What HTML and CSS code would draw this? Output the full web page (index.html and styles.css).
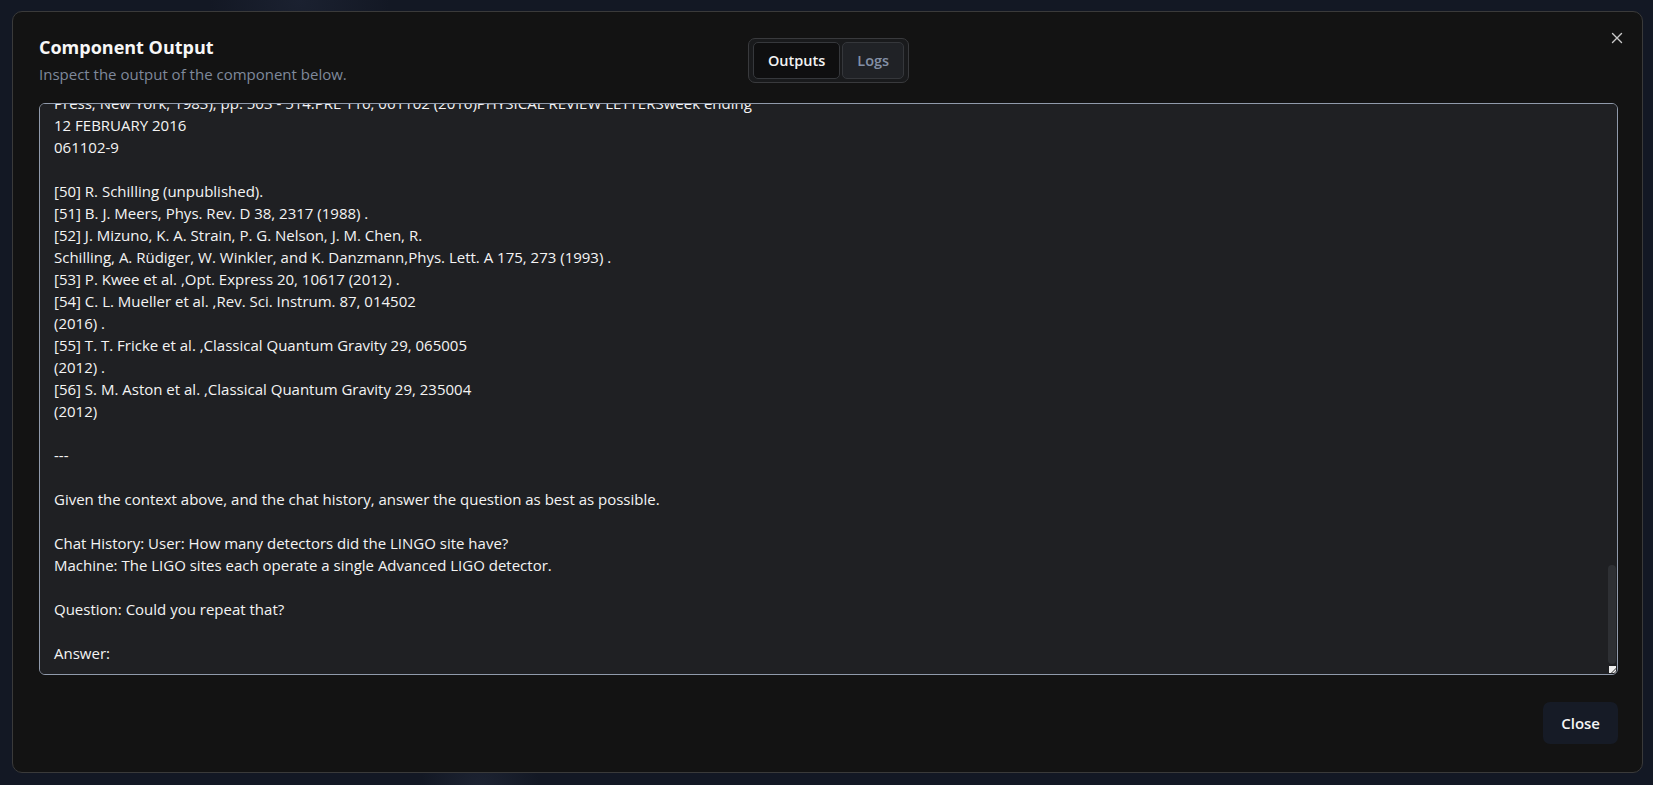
FILE: index.html
```html
<!DOCTYPE html>
<html lang="en">
<head>
<meta charset="utf-8">
<title>Component Output</title>
<link rel="stylesheet" href="styles.css">
<script src="script.js" defer></script>
</head>
<body>
<div class="dialog" role="dialog" aria-labelledby="dlg-title">
  <button class="dialog-x" aria-label="Close">
    <svg viewBox="0 0 14 14" width="14" height="14"><path d="M2.5 2.5 11.5 11.5M11.5 2.5 2.5 11.5" fill="none" stroke="currentColor" stroke-width="1.4" stroke-linecap="round"/></svg>
  </button>
  <header class="dialog-head">
    <div class="dialog-titles">
      <h2 id="dlg-title" class="dialog-title">Component Output</h2>
      <p class="dialog-sub">Inspect the output of the component below.</p>
    </div>
    <div class="tabs" role="tablist">
      <button class="tab tab-active" role="tab">Outputs</button>
      <button class="tab" role="tab">Logs</button>
    </div>
    <div></div>
  </header>
  <div class="output-wrap">
  <textarea class="output" readonly spellcheck="false">The LIGO detectors have observed gravitational waves from
the merger of two stellar-mass black holes. The detected
waveform matches the predictions of general relativity for
the inspiral and merger of a pair of black holes and the
ringdown of the resulting single black hole. These
observations demonstrate the existence of binary stellar-mass
black hole systems. This is the first direct detection of
gravitational waves and the first observation of a binary
black hole merger.

Acknowledgments.—The authors gratefully acknowledge the
support of the United States
National Science Foundation (NSF) for the construction and
operation of the LIGO Laboratory and Advanced LIGO as well
as the Science and Technology Facilities Council (STFC) of the
United Kingdom, the Max-Planck-Society (MPS), and the State
of Niedersachsen/Germany for support of the construction of
Advanced LIGO and construction and operation of the
GEO600 detector. Additional support for Advanced LIGO
was provided by the Australian Research Council. We
gratefully acknowledge the Italian Istituto Nazionale di Fisica
Nucleare (INFN), the French Centre National de la Recherche
Scientifique (CNRS) and the Foundation for Fundamental
Research on Matter supported by the Netherlands
Organisation for Scientific Research, for the construction
and operation of the Virgo detector and the creation and
support of the EGO consortium.

[1] A. Einstein, Sitzungsber. K. Preuss. Akad. Wiss. 1, 688
(1916).
[2] A. Einstein, Sitzungsber. K. Preuss. Akad. Wiss. 1, 154
(1918).
[3] P. R. Saulson, Gen. Relativ. Gravit. 43, 3289 (2011) .
[4] K. Schwarzschild, Sitzungsber. K. Preuss. Akad. Wiss. 1,
189 (1916).
[5] D. Finkelstein, Phys. Rev. 110, 965 (1958) .
[6] M. D. Kruskal, Phys. Rev. 119, 1743 (1960) .
[7] R. P. Kerr, Phys. Rev. Lett. 11, 237 (1963) .
[8] C. V. Vishveshwara, Nature (London) 227, 936 (1970) .
[9] W. H. Press, Astrophys. J. 170, L105 (1971) .
[10] S. Chandrasekhar and S. L. Detweiler, Proc. R. Soc. A
344, 441 (1975) .
[11] R. A. Hulse and J. H. Taylor, Astrophys. J. 195, L51
(1975) .
[12] J. H. Taylor and J. M. Weisberg, Astrophys. J. 253, 908
(1982) .
[13] W. Press and K. Thorne, Annu. Rev. Astron. Astrophys.
10, 335 (1972) .
[14] J. Weber, Phys. Rev. 117, 306 (1960) .
[15] P. Astone et al. ,Phys. Rev. D 82, 022003 (2010) .
[16] M. E. Gertsenshtein and V. I. Pustovoit, Sov. Phys. JETP
16, 433 (1962) .
[17] G. E. Moss, L. R. Miller, and R. L. Forward, Appl. Opt.
10, 2495 (1971) .
[18] R. Weiss, Electromagnetically coupled broadband
gravitational antenna, Quarterly Report of the Research
Laboratory for Electronics, MIT Report No. 105, 1972,
https://dcc.ligo.org/LIGO-P720002/public/main.
[19] R. W. P. Drever, in Gravitational Radiation, edited by N.
Deruelle and T. Piran (North-Holland, Amsterdam, 1983),
p. 321.
[20] R. W. P. Drever, F. J. Raab, K. S. Thorne, R. Vogt, and R.
Weiss, Laser Interferometer Gravitational-wave
Observatory (LIGO) Technical Report, 1989,
https://dcc.ligo.org/LIGO-M890001/public/main.
[21] A. Abramovici et al. ,Science 256, 325 (1992) .
[22] A. Brillet, A. Giazotto et al. , Virgo Project Technical
Report No. VIR-0517A-15, 1989,
https://tds.ego-gw.it/ql/?c=10728.
[23] J. Hough et al. , Proposal for a joint German-British
interferometric gravitational wave detector, MPQ Technical
Report 147, No. GWD/137/JH(89), 1989,
http://eprints.gla.ac.uk/114852.
[24] J. Aasi et al. ,Classical Quantum Gravity 32, 074001
(2015) .
[25] F. Acernese et al. ,Classical Quantum Gravity 32, 024001
(2015) .
[26] C. Affeldt et al. ,Classical Quantum Gravity 31, 224002
(2014) .
[27] Y. Aso, Y. Michimura, K. Somiya, M. Ando, O.
Miyakawa, T. Sekiguchi, D. Tatsumi, and H. Yamamoto,
Phys. Rev. D 88, 043007 (2013) .
[28] The waveform shown is SXS:BBH:0305, available for
download at http://www.black-holes.org/waveforms.
[29] A. H. Mroué et al. ,Phys. Rev. Lett. 111, 241104 (2013) .
[30] B. P. Abbott et al. ,arXiv:1602.03843.
[31] N. J. Cornish and T. B. Littenberg, Classical Quantum
Gravity 32, 135012 (2015) .
[32] B. P. Abbott et al. ,arXiv:1602.03844.
[33] S. Klimenko, I. Yakushin, A. Mercer, and G. Mitselmakher,
Classical Quantum Gravity 25, 114029 (2008) .
[34] S. Klimenko et al. ,arXiv:1511.05999 [Phys. Rev. D (to
be published)].
[35] B. P. Abbott et al. ,arXiv:1602.03842.
[36] B. Allen, W. G. Anderson, P. R. Brady, D. A. Brown, and
J. D. E. Creighton, Phys. Rev. D 85, 122006 (2012) .
[37] S. Babak et al. ,Phys. Rev. D 87, 024033 (2013) .
[38] B. P. Abbott et al. ,arXiv:1602.03840.
[39] A. Taracchini et al. ,Phys. Rev. D 89, 061502 (2014) .
[40] M. Pürrer, Classical Quantum Gravity 31, 195010 (2014) .
[41] S. Husa, S. Khan, M. Hannam, M. Pürrer, F. Ohme, X.
Jiménez Forteza, and A. Bohé, Phys. Rev. D 93, 044006
(2016) .
[42] S. Khan, S. Husa, M. Hannam, F. Ohme, M. Pürrer, X.
Jiménez Forteza, and A. Bohé, Phys. Rev. D 93, 044007
(2016) .
[43] M. Hannam, P. Schmidt, A. Bohé, L. Haegel, S. Husa, F.
Ohme, G. Pratten, and M. Pürrer, Phys. Rev. Lett. 113,
151101 (2014) .
[44] B. P. Abbott et al. ,arXiv:1602.03841.
[45] B. P. Abbott et al. ,arXiv:1602.03846.
[46] B. P. Abbott et al. ,arXiv:1602.03847.
[47] B. P. Abbott et al. ,arXiv:1602.03848.
[48] R. W. P. Drever, J. L. Hall, F. V. Kowalski, J. Hough,
G. M. Ford, A. J. Munley, and H. Ward, Appl. Phys. B 31,
97 (1983) .
[49] R. W. P. Drever, in Quantum Optics, Experimental
Gravity, and Measurement Theory, edited by P. Meystre and
M. O. Scully, NATO ASI, Ser. B, Vol. 94 (Plenum
Press, New York, 1983), pp. 503 - 514.PRL 116, 061102 (2016)PHYSICAL REVIEW LETTERSweek ending
12 FEBRUARY 2016
061102-9

[50] R. Schilling (unpublished).
[51] B. J. Meers, Phys. Rev. D 38, 2317 (1988) .
[52] J. Mizuno, K. A. Strain, P. G. Nelson, J. M. Chen, R.
Schilling, A. Rüdiger, W. Winkler, and K. Danzmann,Phys. Lett. A 175, 273 (1993) .
[53] P. Kwee et al. ,Opt. Express 20, 10617 (2012) .
[54] C. L. Mueller et al. ,Rev. Sci. Instrum. 87, 014502
(2016) .
[55] T. T. Fricke et al. ,Classical Quantum Gravity 29, 065005
(2012) .
[56] S. M. Aston et al. ,Classical Quantum Gravity 29, 235004
(2012)

---

Given the context above, and the chat history, answer the question as best as possible.

Chat History: User: How many detectors did the LINGO site have?
Machine: The LIGO sites each operate a single Advanced LIGO detector.

Question: Could you repeat that?

Answer:</textarea>
    <div class="scroll-thumb" aria-hidden="true"></div>
    <div class="resize-corner" aria-hidden="true"></div>
  </div>
  <footer class="dialog-foot">
    <button class="btn-close">Close</button>
  </footer>
</div>
</body>
</html>
```
FILE: styles.css
```css
* { box-sizing: border-box; }

html, body { height: 100%; }

body {
  margin: 0;
  padding: 11px 0 0 12px;
  background:
    radial-gradient(circle at 480px 790px, rgba(60, 70, 95, 0.25), transparent 60px),
    radial-gradient(circle at 300px 0, rgba(50, 60, 85, 0.25), transparent 90px),
    #131824;
  font-family: "Open Sans", "Noto Sans", sans-serif;
  color: #f5f5f5;
  overflow: hidden;
}

.dialog {
  position: relative;
  width: 1631px;
  padding: 21px 24px 28px 26px;
  background: #131313;
  border: 1px solid #3a3a3a;
  border-radius: 10px;
  display: flex;
  flex-direction: column;
}

.dialog-x {
  position: absolute;
  top: 19px;
  right: 18px;
  width: 14px;
  height: 14px;
  padding: 0;
  border: 0;
  background: none;
  color: #c9c9c9;
  display: flex;
  cursor: pointer;
}

.dialog-head {
  display: grid;
  grid-template-columns: 1fr auto 1fr;
  align-items: start;
  margin-bottom: 19px;
}

.dialog-title {
  margin: 0 0 3px;
  font-size: 18px;
  line-height: 28px;
  font-weight: 700;
  color: #f7f7f7;
}

.dialog-sub {
  margin: 0;
  font-size: 15px;
  line-height: 20px;
  color: #7f899b;
}

.tabs {
  margin-top: 5px;
  display: flex;
  gap: 2px;
  padding: 3px 4px;
  background: #191a1c;
  border: 1px solid #393a3d;
  border-radius: 7px;
}

.tab {
  height: 37px;
  padding: 0 14px;
  font-family: "Open Sans", "Noto Sans", sans-serif;
  font-size: 14.5px;
  font-weight: 600;
  color: #8390a6;
  background: #202226;
  border: 1px solid #35373b;
  border-radius: 5px;
}

.tab-active {
  color: #f3f3f3;
  background: #0f0f10;
  border-color: #36383c;
}

.output-wrap {
  position: relative;
}

.output {
  display: block;
  width: 100%;
  height: 572px;
  margin: 0;
  padding: 10px 12px 10px 14px;
  font-family: "Open Sans", "Noto Sans", sans-serif;
  font-size: 15px;
  line-height: 22px;
  color: #f4f4f4;
  background: #1f2023;
  border: 1px solid #909aab;
  border-radius: 6px;
  outline: none;
  white-space: pre;
  overflow-x: hidden;
  overflow-y: auto;
  resize: vertical;
}

.output::-webkit-resizer {
  background: transparent;
}

.scroll-thumb {
  position: absolute;
  right: 2px;
  bottom: 11px;
  width: 8px;
  height: 99px;
  background: #2e3034;
  border-radius: 4px;
  pointer-events: none;
}

.resize-corner {
  position: absolute;
  right: 2px;
  bottom: 2px;
  width: 7px;
  height: 7px;
  background:
    linear-gradient(135deg, transparent 62%, #8a8a8a 62%, #8a8a8a 72%, transparent 72%),
    linear-gradient(135deg, transparent 82%, #8a8a8a 82%),
    #eeeeee;
  pointer-events: none;
}

.dialog-foot {
  margin-top: 27px;
  display: flex;
  justify-content: flex-end;
}

.btn-close {
  height: 42px;
  padding: 0 18px;
  font-family: "Open Sans", "Noto Sans", sans-serif;
  font-size: 15px;
  font-weight: 600;
  color: #f5f5f5;
  background: #161b26;
  border: 0;
  border-radius: 7px;
}
```
FILE: script.js
```js
document.addEventListener('DOMContentLoaded', function () {
  var out = document.querySelector('.output');
  if (out) out.scrollTop = out.scrollHeight;
});
```
